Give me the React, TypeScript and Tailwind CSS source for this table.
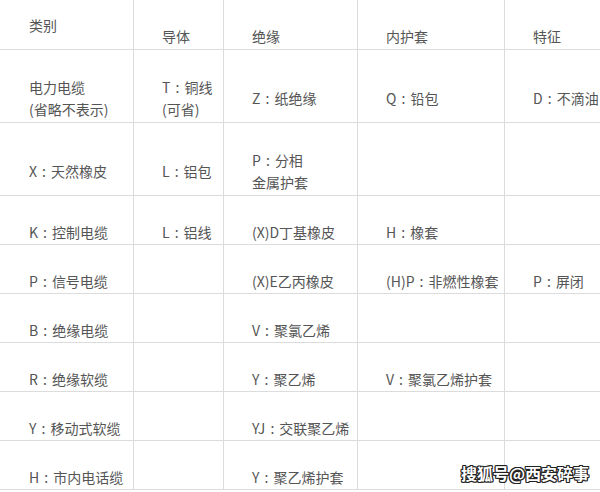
import React from "react";

const rows: (string[] | null)[][] = [
  [["类别", ""], ["导体"], ["绝缘"], ["内护套"], ["特征"]],
  [["电力电缆", "(省略不表示)"], ["T：铜线", "(可省)"], ["Z：纸绝缘"], ["Q：铅包"], ["D：不滴油"]],
  [["X：天然橡皮"], ["L：铝包"], ["P：分相", "金属护套"], null, null],
  [["K：控制电缆"], ["L：铝线"], ["(X)D丁基橡皮"], ["H：橡套"], null],
  [["P：信号电缆"], null, ["(X)E乙丙橡皮"], ["(H)P：非燃性橡套"], ["P：屏闭"]],
  [["B：绝缘电缆"], null, ["V：聚氯乙烯"], null, null],
  [["R：绝缘软缆"], null, ["Y：聚乙烯"], ["V：聚氯乙烯护套"], null],
  [["Y：移动式软缆"], null, ["YJ：交联聚乙烯"], null, null],
  [["H：市内电话缆"], null, ["Y：聚乙烯护套"], null, null],
];

function Line({ text }: { text: string }) {
  const parts = text.split("：");
  return (
    <div className="h-[22px] shrink-0 whitespace-nowrap">
      {parts.map((p, i) => (
        <React.Fragment key={i}>
          {i > 0 && <span className="inline-block w-[14px] text-center">:</span>}
          {p}
        </React.Fragment>
      ))}
    </div>
  );
}

export default function App() {
  return (
    <div
      className="relative w-[600px] h-[492px] overflow-hidden bg-white text-[#555] text-[14px] leading-[22px]"
      style={{ fontFamily: '"Noto Sans CJK SC", "Noto Sans", sans-serif' }}
    >
      <div className="grid w-[660px] grid-cols-[134px_90px_134px_147px_155px] grid-rows-[50px_73px_73px_49px_49px_49px_49px_49px_49px]">
        {rows.map((row, ri) =>
          row.map((cell, ci) => (
            <div
              key={`${ri}-${ci}`}
              className={`flex flex-col justify-center pt-[23px] border-r border-b border-[#dcdcdc] ${ci === 0 ? "pl-[29px]" : "pl-[28px]"}`}
            >
              {cell && cell.map((line, li) => <Line key={li} text={line} />)}
            </div>
          ))
        )}
      </div>
      <div className="absolute left-[461px] top-[462px] text-[16px] leading-[22px] font-bold text-white whitespace-nowrap [text-shadow:1px_0_0_#222,-1px_0_0_#222,0_1px_0_#222,0_-1px_0_#222,1px_1px_0_#222,-1px_-1px_0_#222,1px_-1px_0_#222,-1px_1px_0_#222]">
        搜狐号@西安碎事
      </div>
    </div>
  );
}
